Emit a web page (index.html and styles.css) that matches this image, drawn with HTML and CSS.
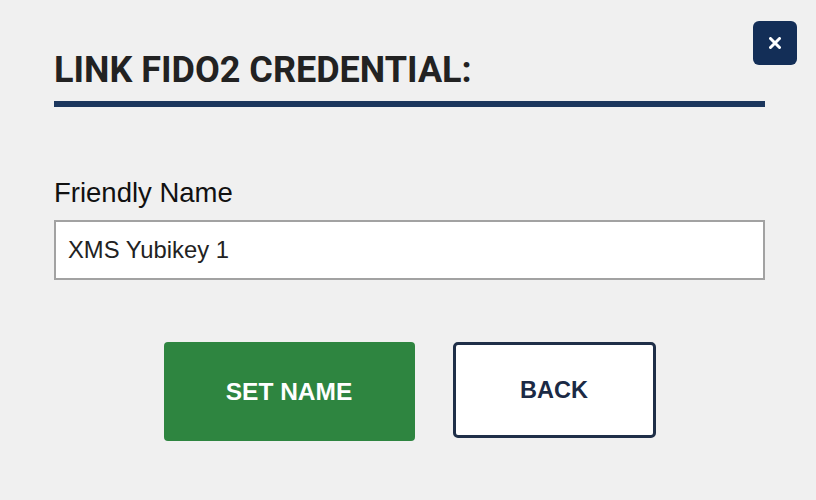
FILE: index.html
```html
<!DOCTYPE html>
<html lang="en">
<head>
    <meta charset="UTF-8">
    <title>Link FIDO2 Credential</title>
    <link rel="stylesheet" href="styles.css">
</head>
<body>
    <div class="dialog">
        <button class="close" type="button" aria-label="Close">
            <svg width="12" height="12" viewBox="0 0 12 12">
                <path d="M1.5 1.5 L10.5 10.5 M10.5 1.5 L1.5 10.5" stroke="#fff" stroke-width="3" stroke-linecap="round"/>
            </svg>
        </button>

        <h1 class="title">LINK FIDO2 CREDENTIAL:</h1>

        <form class="form">
            <label class="label" for="friendlyname">Friendly Name</label>
            <input class="field" type="text" id="friendlyname" value="XMS Yubikey 1" autocomplete="off">

            <div class="actions">
                <button class="btn btn-primary" type="button">SET NAME</button>
                <button class="btn btn-secondary" type="button">BACK</button>
            </div>
        </form>
    </div>
</body>
</html>
```

FILE: styles.css
```css
html, body {
    margin: 0;
    background: #f0f0f0;
}
.dialog {
    position: relative;
    padding: 49px 51px 0 54px;
    height: 451px;
}
.close {
    position: absolute;
    top: 21px;
    left: 753px;
    width: 44px;
    height: 44px;
    border: none;
    border-radius: 6px;
    background: #132e57;
    display: flex;
    align-items: center;
    justify-content: center;
    padding: 0;
    cursor: pointer;
}
.title {
    font: bold 36px/1.2 Roboto, "Liberation Sans", sans-serif;
    color: #222;
    margin: 0;
    padding-bottom: 9px;
    border-bottom: 6px solid #1b365d;
}
.form {
    display: flex;
    flex-direction: column;
}
.label {
    font: 27.5px/1.2 "Liberation Sans", Arial, sans-serif;
    color: #111;
    margin-top: 69px;
}
.field {
    box-sizing: border-box;
    margin: 11px 0 0;
    height: 60px;
    width: 100%;
    border: 2px solid #a2a2a2;
    background: #fff;
    padding: 0 12px;
    font: 23.8px "Liberation Sans", Arial, sans-serif;
    color: #222;
    outline: none;
}
.actions {
    display: flex;
    justify-content: center;
    align-items: flex-start;
    gap: 38px;
    margin-top: 62px;
}
.btn {
    box-sizing: border-box;
    font: bold 24.5px "Liberation Sans", Arial, sans-serif;
    display: flex;
    align-items: center;
    justify-content: center;
    padding: 0;
    cursor: pointer;
}
.btn-primary {
    width: 251px;
    height: 99px;
    border: none;
    border-radius: 4px;
    background: #2e8540;
    color: #fff;
}
.btn-secondary {
    width: 203px;
    height: 96px;
    border: 3px solid #1f2f48;
    border-radius: 5px;
    background: #fff;
    color: #1b2a45;
    font-size: 23.5px;
}
```
